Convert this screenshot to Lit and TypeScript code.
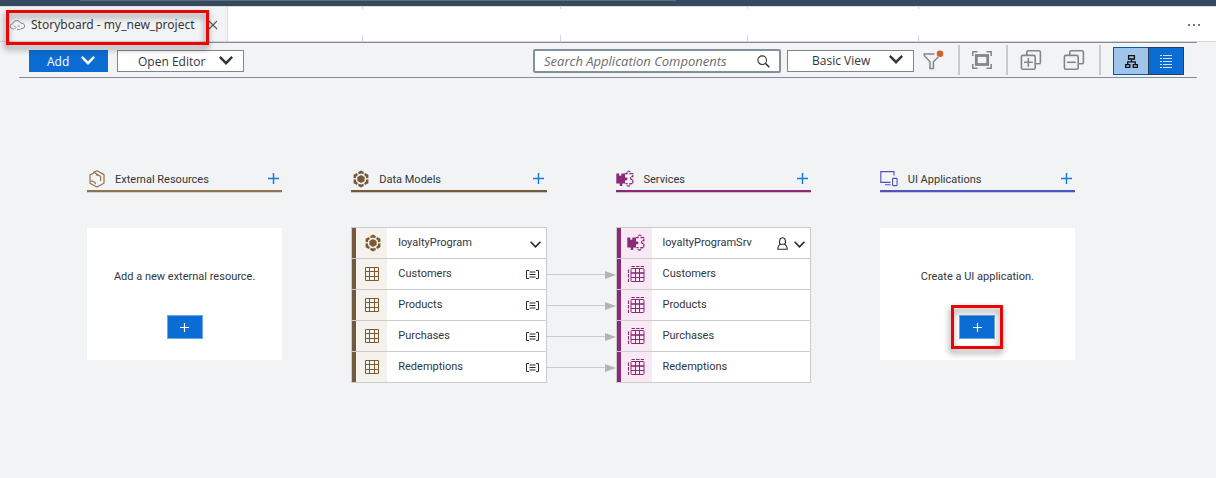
import { LitElement, html, css, svg, nothing } from "lit";
import { customElement, property } from "lit/decorators.js";
import { classMap } from "lit/directives/class-map.js";

type Kind = "external" | "data" | "service" | "ui";

const chevron = (cls: string) => html`<svg class=${cls} viewBox="0 0 14 9" aria-hidden="true">
  <path d="M.8 .9 7 7.2 13.2 .9" fill="none" stroke="currentColor" stroke-width="2.5" /></svg>`;

const thinChevron = html`<svg width="11" height="7" viewBox="0 0 11 7" aria-hidden="true">
  <path d="M.6 .8 5.5 5.8 10.4 .8" fill="none" stroke="currentColor" stroke-width="1.6" /></svg>`;

const plus = (size: number, weight: number) => html`<svg width=${size} height=${size} viewBox="0 0 10 10" aria-hidden="true">
  <path d="M5 0V10M0 5H10" fill="none" stroke="currentColor" stroke-width=${weight} /></svg>`;

const kindShapes = {
  external: svg`<g fill="none" stroke="currentColor" stroke-width="1.2" stroke-linejoin="round">
    <path d="M6.2 2.6 10 .8 17 4.6V13.2L10 17 3 13.2V4.8L5.8 3.6" />
    <path d="M5.8 3.6 7.4 2.6 13.6 6.4V11M12.6 5.8 9 4.6M3.6 11.2 5.2 11 8 12.6 8.6 14" />
  </g>`,
  data: svg`<path d="M10 5 13.6 7V11.1L10 13.1 6.4 11.1V7Z" fill="currentColor" />
    <g fill="currentColor">
      <path d="M7.2 2.1 10 .5 12.8 2.1 12.4 4.3 10 3.6 7.6 4.3Z" />
      <path d="M7.2 15.9 10 17.5 12.8 15.9 12.4 13.7 10 14.4 7.6 13.7Z" />
      <path d="M6 2.9 2.6 4.7V7.9L4.9 8.3 5.3 6.3 6.9 5Z" />
      <path d="M14 2.9 17.4 4.7V7.9L15.1 8.3 14.7 6.3 13.1 5Z" />
      <path d="M6 15.1 2.6 13.3V9.3L4.9 9.6 5.3 11.8 6.9 13.1Z" />
      <path d="M14 15.1 17.4 13.3V9.3L15.1 9.6 14.7 11.8 13.1 13.1Z" />
    </g>`,
  service: svg`<path d="M.3 3.5H3.2V5.3Q4.3 6.4 5.4 5.3V3.5H9V7.6H10.9Q12.3 9 10.9 10.3H9V13.5H6.3V15.4Q5 16.8 3.7 15.4V13.5H.3Z" fill="currentColor" />
    <path d="M9 3.6H11V1.8Q12.5 .2 14 1.8V3.6H16.8V6.6H15.2Q13.8 8 15.2 9.4H16.8V13.6H14V15.4Q12.5 17 11 15.4V13.6H9.4" fill="none" stroke="currentColor" stroke-width="1.2" stroke-dasharray="3.4 .9" />`,
  ui: svg`<g fill="none" stroke="currentColor" stroke-width="1.1">
    <path d="M14 5.5V1.6H.8V12.4H10.5M5 14.7H10.6" />
    <rect x="12.6" y="8.4" width="4.5" height="7.2" rx=".5" />
  </g>`,
};

const kindIcon = (kind: Kind) => html`<svg width="18" height="18" viewBox="0 0 18 18" aria-hidden="true">${kindShapes[kind]}</svg>`;

const gridIcon = html`<svg width="16" height="16" viewBox="0 0 16 16" aria-hidden="true">
  <path d="M1.5 1.5H14.5V14.5H1.5ZM5.5 1.5V14.5M10.5 1.5V14.5M1.5 5.5H14.5M1.5 10.5H14.5" fill="none" stroke="currentColor" stroke-width="1" /></svg>`;

const projectionIcon = html`<svg width="18" height="18" viewBox="0 0 18 18" aria-hidden="true">
  <g fill="none" stroke="currentColor">
    <rect x="4" y="3.5" width="13" height="13" rx="1" stroke-width="1" />
    <path d="M8.5 3.5V16.5M12.5 3.5V16.5M4 12.5H17" stroke-width="1" />
    <path d="M4 8H17" stroke-width="1.6" />
    <path d="M4.5 1.5H17M1.5 4.5V17" stroke-width="1.1" stroke-dasharray="3.4 1.2" />
  </g></svg>`;

const annotationIcon = html`<svg width="13" height="9" viewBox="0 0 13 9" role="img" aria-label="Fields">
  <path d="M3 .5H.5V8.5H3M10 .5H12.5V8.5H10" fill="none" stroke="currentColor" stroke-width="1" />
  <path d="M3.5 2H9.5M3.5 4.5H9.5M3.5 7H9.5" fill="none" stroke="currentColor" stroke-width="1.2" /></svg>`;

const personIcon = html`<svg width="11" height="13" viewBox="0 0 11 13" role="img" aria-label="Requires user">
  <path d="M3.6 7.2C1.6 6.2 2.3 .8 5.5 .8S9.4 6.2 7.4 7.2Q10 8.2 10.2 12.2H.8Q1 8.2 3.6 7.2H7.4" fill="none" stroke="currentColor" stroke-width="1.1" /></svg>`;

@customElement("lane-header")
class LaneHeader extends LitElement {
  @property() kind: Kind = "external";
  @property() label = "";

  static styles = css`
    :host { display: block; }
    .lane {
      display: flex; align-items: center; gap: 10px; height: 23px;
      box-sizing: border-box; padding-right: 3px;
      border-bottom: 2px solid var(--tone);
      box-shadow: 0 1px 0 var(--halo);
    }
    .external { --tone: #907250; --halo: #d9d0c6; }
    .data { --tone: #745a3a; --halo: #d0c8be; }
    .service { --tone: #8a2a76; --halo: #dcbcd6; }
    .ui { --tone: #4f53bd; --halo: #c6c8e8; }
    .icon { display: flex; padding-bottom: 2px; color: var(--tone); }
    .title { flex: 1; margin: 0; font-size: 11px; font-weight: 400; line-height: 21px; white-space: nowrap; }
    .add { display: flex; padding: 0 0 3px; border: 0; background: none; color: #1a78d6; }
  `;

  render() {
    return html`<header class="lane ${this.kind}">
      <span class="icon">${kindIcon(this.kind)}</span>
      <h2 class="title">${this.label}</h2>
      <button class="add" aria-label="Add to ${this.label}">${plus(11, 1.3)}</button>
    </header>`;
  }
}

@customElement("empty-card")
class EmptyCard extends LitElement {
  @property() text = "";
  @property({ type: Boolean }) marked = false;

  static styles = css`
    :host { display: block; }
    .card {
      display: flex; flex-direction: column; align-items: center; gap: 31px;
      padding: 42px 8px 21px; background: #fff; margin-top: 1px;
    }
    .text { margin: 0; font-size: 11px; line-height: 14px; }
    .holder { position: relative; display: flex; }
    .create {
      display: flex; align-items: center; justify-content: center;
      width: 36px; height: 24px; padding: 0; color: #fff;
      background: #0b6dd3; border: 1px solid #6aa8e6;
    }
    .mark {
      position: absolute; inset: -10px -8px; border: 3px solid #ec0404;
      filter: drop-shadow(-1px 4px 3px rgba(0, 0, 0, 0.45)); pointer-events: none;
    }
  `;

  render() {
    return html`<div class="card">
      <p class="text">${this.text}</p>
      <div class="holder">
        <button class="create" aria-label=${this.text}>${plus(9, 1.3)}</button>
        ${this.marked ? html`<span class="mark"></span>` : nothing}
      </div>
    </div>`;
  }
}

@customElement("entity-card")
class EntityCard extends LitElement {
  @property() kind: Kind = "data";
  @property() name = "";
  @property({ attribute: false }) entities: string[] = [];

  static styles = css`
    :host { display: block; }
    .list { list-style: none; margin: 0; padding: 0; border: 1px solid #cbcbcb; border-top: 0; }
    .data { --tone: #745a3a; --tint: #f5f2ee; --ink: #7a5a34; }
    .service { --tone: #8a2a76; --tint: #f8e9f5; --ink: #8a2a76; }
    .row {
      display: flex; align-items: center; height: 31px; box-sizing: border-box;
      border-top: 1px solid #cbcbcb; background: #fff;
    }
    .icon {
      display: flex; align-items: center; justify-content: center; align-self: stretch;
      width: 31px; border-left: 4px solid var(--tone); background: var(--tint); color: var(--ink);
    }
    .name { flex: 1; padding-left: 11px; font-size: 11px; line-height: 16px; white-space: nowrap; }
    .tools { display: flex; align-items: center; gap: 6px; padding-right: 7px; color: #222a35; }
    .toggle { display: flex; padding: 3px 0 0; margin-right: -2px; border: 0; background: none; color: inherit; }
  `;

  render() {
    const isData = this.kind === "data";
    return html`<ul class="list ${this.kind}">
      <li class="row">
        <span class="icon">${kindIcon(this.kind)}</span>
        <span class="name">${this.name}</span>
        <span class="tools">
          ${isData ? nothing : personIcon}
          <button class="toggle" aria-label="Collapse ${this.name}">${thinChevron}</button>
        </span>
      </li>
      ${this.entities.map((e) => html`<li class="row">
        <span class="icon">${isData ? gridIcon : projectionIcon}</span>
        <span class="name">${e}</span>
        ${isData ? html`<span class="tools">${annotationIcon}</span>` : nothing}
      </li>`)}
    </ul>`;
  }
}

@customElement("app-root")
class AppRoot extends LitElement {
  private entities = ["Customers", "Products", "Purchases", "Redemptions"];

  static styles = css`
    :host {
      display: block; min-height: 100vh; background: #f2f3f5; color: #32363a;
      font-family: Roboto, "Liberation Sans", sans-serif;
    }
    .titlebar { height: 6px; background: #354a5f; }
    .command { width: 49%; height: 1px; margin-left: 80px; background: #5c6d80; }
    .tabs {
      display: flex; height: 36px; box-sizing: border-box; background: #fff;
      border-top: 1px solid #dcdcdf; border-bottom: 1px solid #d3d4d8;
      font-family: "Noto Sans", "Open Sans", sans-serif;
    }
    .tab {
      position: relative; display: flex; align-items: center; gap: 5px; flex: none;
      padding: 2px 9px 0; background: #f2f3f5; border-right: 1px solid #dcdcdf; font-size: 12px; line-height: 18px;
    }
    .close { display: flex; padding: 0; margin-left: 8px; border: 0; background: none; color: #555; }
    .slot {
      box-sizing: border-box; border-right: 1px solid;
      border-image: linear-gradient(#d3d4d8 0 3px, transparent 3px 27px, #d3d4d8 27px) 1;
    }
    .s1 { flex: 135; } .s2 { flex: 198; } .s3 { flex: 186; } .s4 { flex: 171; }
    .rest { flex: 283; display: flex; align-items: center; justify-content: flex-end; padding: 2px 15px 0 0; }
    .more { display: flex; padding: 0; border: 0; background: none; color: #777; }
    .mark {
      position: absolute; z-index: 1; inset: 3px 18px -4px 6px; border: 3px solid #ec0404;
      filter: drop-shadow(-1px 4px 3px rgba(0, 0, 0, 0.45)); pointer-events: none;
    }
    .toolbar {
      display: flex; align-items: center; height: 36px; box-sizing: border-box; margin: 0 19px;
      padding: 2px 13px 0 10px; border: 1px solid #858b99; border-width: 1px 0;
      font-family: "Open Sans", "Noto Sans", sans-serif;
    }
    button, select, input { font-family: inherit; color: inherit; border-radius: 0; margin: 0; }
    .chev { width: 14px; height: 9px; margin-bottom: 4px; }
    .btn {
      display: flex; align-items: center; height: 22px; box-sizing: border-box;
      border: 1px solid #7d8793; background: #fff; font-size: 12px; line-height: 18px;
    }
    .add { width: 79px; justify-content: space-between; padding: 2px 12px 0 17px; background: #0b6dd3; border-color: #0b6dd3; color: #fff; }
    .editor { width: 127px; justify-content: space-between; padding: 2px 10px 0 20px; margin-left: 9px; }
    .spacer { flex: 1; }
    .search {
      display: flex; align-items: center; width: 248px; height: 24px; box-sizing: border-box;
      border: 2px solid #84909b; border-radius: 2px; background: #fff; padding: 0 9px; margin-right: 6px;
    }
    .query {
      flex: 1; min-width: 0; border: 0; padding: 0; background: none; outline: 0;
      font-size: 13px; line-height: 18px;
    }
    .query::placeholder { color: #6c6c6c; font-style: italic; opacity: 1; }
    .view { display: grid; align-items: center; width: 127px; }
    .view > * { grid-area: 1 / 1; }
    .view .choice { appearance: none; width: 100%; padding: 0 24px; }
    .view .chev { justify-self: end; margin-right: 11px; pointer-events: none; }
    .tool { display: flex; padding: 0 0 2px; border: 0; background: none; color: #858585; }
    .funnel { margin-left: 9px; }
    .divider { width: 2px; height: 30px; background: #c9cbd1; margin: 0 12px 2px 14px; }
    .gap { margin-left: 21px; }
    .modes { display: flex; height: 28px; }
    .mode {
      display: flex; align-items: center; justify-content: center; width: 36px; box-sizing: border-box;
      padding: 0; border: 1px solid #2a3d55; background: #0b6dd3; color: #cfe3f8;
    }
    .mode.on { background: #a0c4ea; border-color: #0b58a8; border-right: 0; width: 35px; color: #111; }
    .board {
      display: grid; grid-template-columns: 1fr 69px 1fr 69px 1fr 69px 1fr;
      row-gap: 35px; padding: 91px 141px 24px 87px; align-items: start;
    }
    .c1 { grid-column: 1; } .c2 { grid-column: 3; } .c3 { grid-column: 5; } .c4 { grid-column: 7; }
    .links { grid-column: 4; list-style: none; margin: 0; padding: 32px 0 0; }
    .link { display: flex; align-items: center; height: 31px; }
    .line { flex: 1; height: 1px; background: #cbcccd; }
  `;

  render() {
    return html`
      <div class="titlebar"><div class="command"></div></div>
      <nav class="tabs">
        <div class="tab">
          <svg width="17" height="13" viewBox="0 0 17 13" aria-hidden="true">
            <path d="M4.5 9.5H3.3Q.8 9 1 7Q1.3 5 3.5 5Q4.2 1.6 7.6 1.5Q10.5 1.4 11.6 4Q15.5 4 15.8 7Q15.7 9.5 13 9.5H11.8M5 6.5 7 8.5 5 10.5M8.5 7H11M8 10.6H11.5" fill="none" stroke="#8a8a8a" stroke-width="1" />
          </svg>
          <span>Storyboard - my_new_project</span>
          <button class="close" aria-label="Close tab">
            <svg width="10" height="10" viewBox="0 0 10 10"><path d="M1 1 9 9M9 1 1 9" fill="none" stroke="currentColor" stroke-width="1.1" /></svg>
          </button>
          <span class="mark"></span>
        </div>
        <div class="slot s1"></div><div class="slot s2"></div><div class="slot s3"></div><div class="slot s4"></div>
        <div class="rest">
          <button class="more" aria-label="More">
            <svg width="13" height="2" viewBox="0 0 13 2"><path d="M0 0H2V2H0ZM5 0H7V2H5ZM10 0H12V2H10Z" fill="currentColor" /></svg>
          </button>
        </div>
      </nav>
      <div class="toolbar" role="toolbar">
        <button class="btn add">Add ${chevron("chev")}</button>
        <button class="btn editor">Open Editor ${chevron("chev")}</button>
        <div class="spacer"></div>
        <label class="search">
          <input class="query" type="text" aria-label="Search" placeholder="Search Application Components" />
          <svg width="13" height="13" viewBox="0 0 13 13" aria-hidden="true">
            <circle cx="5.2" cy="5.2" r="4.3" fill="none" stroke="#333" stroke-width="1.1" />
            <path d="M8.3 8.3 12.3 12.3" stroke="#333" stroke-width="1.6" /></svg>
        </label>
        <div class="view">
          <select class="btn choice" aria-label="View"><option>Basic View</option></select>
          ${chevron("chev")}
        </div>
        <button class="tool funnel" aria-label="Filter">
          <svg width="21" height="20" viewBox="0 0 21 20">
            <path d="M11.5 4H1.2V5.5L7 11.8V18.6H10.4V11.8L15.2 6.9" fill="none" stroke="currentColor" stroke-width="1.5" />
            <circle cx="17" cy="3.8" r="3.3" fill="#d0622c" /></svg>
        </button>
        <span class="divider"></span>
        <button class="tool" aria-label="Fit to screen">
          <svg width="20" height="18" viewBox="0 0 20 18">
            <path d="M.8 5V.8H5.5M14.5 .8H19.2V5M19.2 13V17.2H14.5M5.5 17.2H.8V13" fill="none" stroke="currentColor" stroke-width="1.5" />
            <rect x="4.3" y="4.5" width="11.4" height="9" fill="none" stroke="currentColor" stroke-width="2.8" /></svg>
        </button>
        <span class="divider"></span>
        ${[true, false].map((expand) => html`<button class=${classMap({ tool: true, gap: !expand })} aria-label=${expand ? "Expand all" : "Collapse all"}>
          <svg width="22" height="20" viewBox="0 0 22 20">
            <g fill="none" stroke="currentColor" stroke-width="1.6">
              <path d="M6.8 5V2.2Q6.8 .8 8.2 .8H19Q20.4 .8 20.4 2.2V12.4Q20.4 13.8 19 13.8H16" />
              <rect x="1.4" y="5.4" width="13.8" height="13.8" rx="1.5" />
              <path d=${expand ? "M4 12.3H12.8M8.3 8V16.7" : "M4 12.3H12.8"} />
            </g></svg>
        </button>`)}
        <span class="divider"></span>
        <div class="modes">
          <button class="mode on" aria-label="Graph view" aria-pressed="true">
            <svg width="13" height="13" viewBox="0 0 13 13"><path d="M3.6 .7H9.4V4H3.6ZM.6 9.6H4.8V12.3H.6ZM8.2 9.6H12.4V12.3H8.2ZM6.5 4V6.8M2.7 9.6V6.8H10.3V9.6" fill="none" stroke="currentColor" stroke-width="1.3" /></svg>
          </button>
          <button class="mode" aria-label="List view" aria-pressed="false">
            <svg width="12" height="13" viewBox="0 0 12 13"><path d="M0 .5H2M3 .5H12M0 3.5H2M3 3.5H12M0 6.5H2M3 6.5H12M0 9.5H2M3 9.5H12M0 12.5H2M3 12.5H12" fill="none" stroke="currentColor" stroke-width="1" /></svg>
          </button>
        </div>
      </div>
      <main class="board">
        <lane-header class="c1" kind="external" label="External Resources"></lane-header>
        <lane-header class="c2" kind="data" label="Data Models"></lane-header>
        <lane-header class="c3" kind="service" label="Services"></lane-header>
        <lane-header class="c4" kind="ui" label="UI Applications"></lane-header>
        <empty-card class="c1" text="Add a new external resource."></empty-card>
        <entity-card class="c2" kind="data" name="loyaltyProgram" .entities=${this.entities}></entity-card>
        <ul class="links" aria-hidden="true">
          ${this.entities.map(() => html`<li class="link">
            <span class="line"></span>
            <svg width="11" height="8" viewBox="0 0 11 8"><path d="M0 0 11 4 0 8Z" fill="#b4b4b4" /></svg>
          </li>`)}
        </ul>
        <entity-card class="c3" kind="service" name="loyaltyProgramSrv" .entities=${this.entities}></entity-card>
        <empty-card class="c4" text="Create a UI application." marked></empty-card>
      </main>
    `;
  }
}
